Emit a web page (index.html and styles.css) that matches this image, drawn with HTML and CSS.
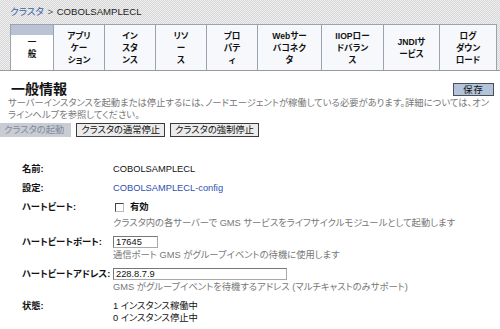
FILE: index.html
```html
<!DOCTYPE html>
<html lang="ja">
<head>
<meta charset="utf-8">
<link rel="stylesheet" href="styles.css">
</head>
<body>
<div class="header">
  <div class="crumb"><span class="crumb-link">クラスタ</span> <span class="sep">&gt;</span> <span class="crumb-cur">COBOLSAMPLECL</span></div>
  <div class="tabs">
    <div class="tab active w43">一<br>般</div>
    <div class="tab w51">アプリ<br>ケー<br>ション</div>
    <div class="tab w51">イン<br>スタ<br>ンス</div>
    <div class="tab w51">リソ<br>ー<br>ス</div>
    <div class="tab w51">プロ<br>パテ<br>ィ</div>
    <div class="tab w64">Webサー<br>バコネク<br>タ</div>
    <div class="tab w62">IIOPロー<br>ドバラン<br>ス</div>
    <div class="tab w56">JNDIサ<br>ービス</div>
    <div class="tab w58 last">ログ<br>ダウン<br>ロード</div>
  </div>
</div>
<div class="content">
  <div class="title-row">
    <h1 class="title">一般情報</h1>
    <button class="btn btn-primary">保存</button>
  </div>
  <p class="help">サーバーインスタンスを起動または停止するには、ノードエージェントが稼働している必要があります。詳細については、オン<br>ラインヘルプを参照してください。</p>
  <div class="actions">
    <button class="btn btn-disabled">クラスタの起動</button>
    <button class="btn">クラスタの通常停止</button>
    <button class="btn">クラスタの強制停止</button>
  </div>
  <div class="props">
    <div class="label">名前:</div>
    <div class="value">COBOLSAMPLECL</div>

    <div class="label">設定:</div>
    <div class="value"><span class="link">COBOLSAMPLECL-config</span></div>

    <div class="label">ハートビート:</div>
    <div class="value">
      <div class="check-line"><span class="checkbox"></span><span class="check-label">有効</span></div>
      <div class="desc">クラスタ内の各サーバーで GMS サービスをライフサイクルモジュールとして起動します</div>
    </div>

    <div class="label">ハートビートポート:</div>
    <div class="value">
      <div class="input input-short">17645</div>
      <div class="desc">通信ポート GMS がグループイベントの待機に使用します</div>
    </div>

    <div class="label">ハートビートアドレス:</div>
    <div class="value">
      <div class="input input-long">228.8.7.9</div>
      <div class="desc">GMS がグループイベントを待機するアドレス (マルチキャストのみサポート)</div>
    </div>

    <div class="label">状態:</div>
    <div class="value">
      <div>1 インスタンス稼働中</div>
      <div>0 インスタンス停止中</div>
    </div>
  </div>
</div>
</body>
</html>
```
FILE: styles.css
```css
html, body {
  margin: 0;
  padding: 0;
  background: #fff;
}
body {
  width: 500px;
  height: 329px;
  overflow: hidden;
  font-family: "Liberation Sans", "Noto Sans CJK JP", sans-serif;
  font-feature-settings: "palt";
  font-size: 9.3px;
  line-height: 12px;
  color: #111;
}
.header {
  background: repeating-conic-gradient(#d6d6d6 0 25%, #f0f0f0 0 50%) 0 0 / 2px 2px;
  border-bottom: 1px solid #9a9a9a;
}
.crumb {
  height: 24px;
  line-height: 24px;
  padding-left: 10px;
  font-size: 9.6px;
  word-spacing: 1px;
}
.crumb-link { color: #3b5ea8; }
.sep { color: #555; }
.crumb-cur { color: #222; }
.tabs {
  display: flex;
  margin-left: 10px;
  height: 46px;
}
.tab {
  box-sizing: border-box;
  border-top: 1px solid #9aa3b0;
  border-left: 1px solid #9aa3b0;
  background: #f6f8fb;
  display: flex;
  align-items: center;
  justify-content: center;
  text-align: center;
  font-size: 8.6px;
  font-weight: bold;
  line-height: 12px;
  color: #111;
  padding-top: 1px;
}
.tab.last { border-right: 1px solid #9aa3b0; }
.tab.active {
  background: linear-gradient(#b9c3d4 0 10px, #ffffff 10px);
}
.w43 { width: 43px; }
.w51 { width: 51px; }
.w56 { width: 56px; }
.w58 { width: 58px; }
.w62 { width: 62px; }
.w64 { width: 64px; }

.content {
  padding: 9px 6px 0 8px;
}
.title-row {
  display: flex;
  justify-content: space-between;
  align-items: flex-start;
  height: 17px;
}
.title {
  margin: 0 0 0 3px;
  font-size: 14px;
  line-height: 19px;
  font-weight: bold;
  color: #111;
}
.btn {
  box-sizing: border-box;
  height: 14px;
  padding: 0 4px;
  margin: 0;
  border: 1px solid #3a3a3a;
  background: #ececec;
  font-family: inherit;
  font-feature-settings: "palt";
  font-size: 9.3px;
  line-height: 12px;
  color: #111;
}
.btn-primary {
  margin-top: 3px;
  width: 41px;
  height: 13px;
  background: #b3c3da;
  border-color: #4a4f5a;
  letter-spacing: 1px;
}
.btn-disabled {
  background: #c9ccd2;
  border-color: #c9ccd2;
  color: #7f8aa0;
  padding: 0 6px 0 3px;
}
.help {
  margin: 0;
  color: #777;
  font-size: 9.3px;
  line-height: 12px;
}
.actions {
  display: flex;
  gap: 5px;
  margin-top: 2px;
  margin-left: -8px;
}
.props {
  display: grid;
  grid-template-columns: 91px 1fr;
  row-gap: 7px;
  margin-top: 26px;
  padding-left: 14px;
}
.label {
  font-weight: bold;
  line-height: 12px;
}
.value {
  line-height: 12px;
}
.link { color: #2f4fb0; }
.check-line {
  display: flex;
  align-items: center;
  height: 12px;
}
.checkbox {
  box-sizing: border-box;
  width: 9px;
  height: 9px;
  margin-left: 2px;
  border: 1px solid #444;
  border-right-color: #bbb;
  border-bottom-color: #bbb;
  background: #fff;
}
.check-label {
  margin-left: 6px;
  font-weight: bold;
}
.desc {
  color: #777;
  margin-top: 4px;
}
.input {
  box-sizing: border-box;
  height: 12px;
  border: 1px solid #a9a9a9;
  border-top-color: #777;
  border-left-color: #777;
  padding: 0 2px;
  line-height: 10px;
  background: #fff;
}
.input-short { width: 45px; }
.input-long { width: 174px; }
.input + .desc { margin-top: 1px; }
```
